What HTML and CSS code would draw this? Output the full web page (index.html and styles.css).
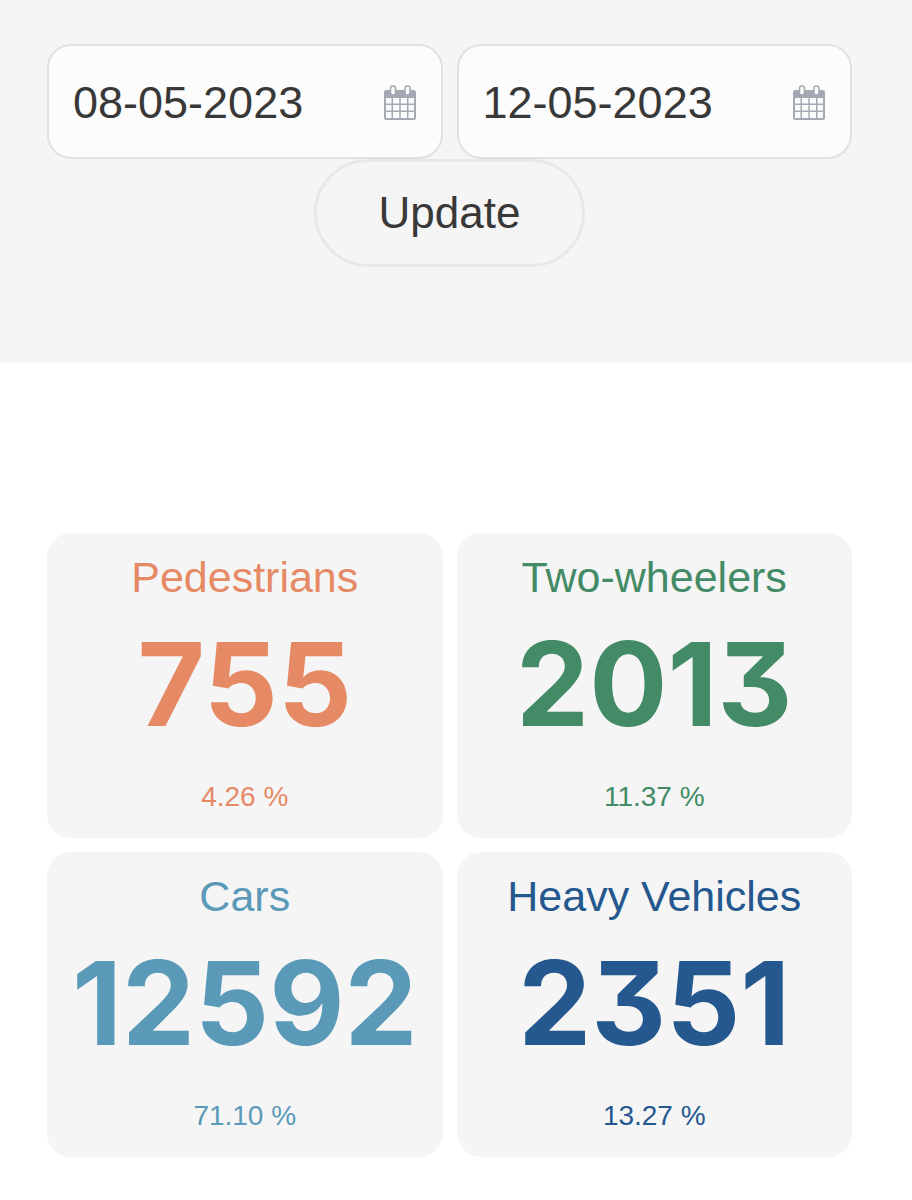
FILE: index.html
```
<!DOCTYPE html>
<html lang="en">
<head>
<meta charset="utf-8">
<meta name="viewport" content="width=device-width, initial-scale=1">
<title>Traffic counts</title>
<link rel="stylesheet" href="styles.css">
</head>
<body>
<svg class="sprite" aria-hidden="true">
  <symbol id="calendar" viewBox="0 0 34 36">
    <rect x="1" y="5" width="32" height="30" rx="2.5" fill="#a3a9b2"/>
    <g fill="#fcfcfc">
      <path d="M3 13h5.500v5.500H3zM10 13h6.300v5.500H10zM17.700 13H24v5.500h-6.300zM25.500 13H31v5.500h-5.500z"/>
      <path d="M3 20h5.500v5.500H3zM10 20h6.300v5.500H10zM17.700 20H24v5.500h-6.300zM25.500 20H31v5.500h-5.500z"/>
      <path d="M3 27h5.500v6H3zM10 27h6.300v6H10zM17.700 27H24v6h-6.300zM25.500 27H31v6h-5.500z"/>
    </g>
    <rect x="7.500" y="1" width="5" height="9" rx="2.200" fill="#fcfcfc" stroke="#a3a9b2" stroke-width="1.500"/>
    <rect x="22" y="1" width="5" height="9" rx="2.200" fill="#fcfcfc" stroke="#a3a9b2" stroke-width="1.500"/>
  </symbol>
</svg>
<form class="filter">
  <div class="fields">
    <div class="field">
      <input class="date" type="text" value="08-05-2023" aria-label="Start date">
      <button class="picker" type="button" aria-label="Choose start date"><svg class="icon"><use href="#calendar"/></svg></button>
    </div>
    <div class="field">
      <input class="date" type="text" value="12-05-2023" aria-label="End date">
      <button class="picker" type="button" aria-label="Choose end date"><svg class="icon"><use href="#calendar"/></svg></button>
    </div>
  </div>
  <button class="update" type="button">Update</button>
</form>
<main class="stats">
  <section class="card pedestrians">
    <h2 class="label">Pedestrians</h2>
    <p class="count">755</p>
    <p class="share">4.26 %</p>
  </section>
  <section class="card two-wheelers">
    <h2 class="label">Two-wheelers</h2>
    <p class="count">2013</p>
    <p class="share">11.37 %</p>
  </section>
  <section class="card cars">
    <h2 class="label">Cars</h2>
    <p class="count">12592</p>
    <p class="share">71.10 %</p>
  </section>
  <section class="card heavy">
    <h2 class="label">Heavy Vehicles</h2>
    <p class="count">2351</p>
    <p class="share">13.27 %</p>
  </section>
</main>
</body>
</html>
```
FILE: styles.css
```
* {
  box-sizing: border-box;
}

body {
  margin: 0;
  background: #fff;
  color: #383838;
  font-family: "Liberation Sans", Arial, sans-serif;
}

.sprite {
  display: none;
}

.filter {
  display: flex;
  flex-direction: column;
  align-items: center;
  padding: 44px 60px 96px 47px;
  background: #f5f5f5;
}

.fields {
  display: grid;
  grid-template-columns: repeat(2, minmax(0, 1fr));
  gap: 14px;
  width: 100%;
}

.field {
  display: flex;
  align-items: center;
  height: 115px;
  padding: 2px 24px 0;
  border: 2px solid #e1e1e1;
  border-radius: 24px;
  background: #fcfcfc;
}

.date {
  flex: 1;
  width: 100%;
  min-width: 0;
  padding: 0;
  border: 0;
  background: none;
  color: inherit;
  font: 45px/56px "Liberation Sans", Arial, sans-serif;
}

.picker {
  display: flex;
  padding: 0;
  border: 0;
  background: none;
}

.icon {
  width: 34px;
  height: 36px;
}

.update {
  height: 108px;
  padding: 0 62px;
  border: 3px solid #e8e8e8;
  border-radius: 54px;
  background: #f5f5f5;
  color: inherit;
  font: 44px/56px "Liberation Sans", Arial, sans-serif;
}

.stats {
  display: grid;
  grid-template-columns: repeat(2, minmax(0, 1fr));
  gap: 14px;
  padding: 170px 60px 40px 47px;
}

.card {
  padding: 16px 0 21px;
  border-radius: 24px;
  background: #f5f5f5;
  text-align: center;
}

.label {
  margin: 0;
  font-size: 43px;
  font-weight: 400;
  line-height: 56px;
}

.count {
  margin: 0;
  padding: 11px 0 9px;
  font-family: Inter, "Liberation Sans", sans-serif;
  font-size: 116px;
  font-weight: 700;
  line-height: 136px;
  font-feature-settings: "cv09";
}

.share {
  margin: 0;
  padding-top: 16px;
  font-size: 28px;
  line-height: 40px;
}

.pedestrians {
  color: #e58a65;
}

.two-wheelers {
  color: #438b66;
}

.cars {
  color: #5a9ab8;
}

.heavy {
  color: #24588f;
}
```
